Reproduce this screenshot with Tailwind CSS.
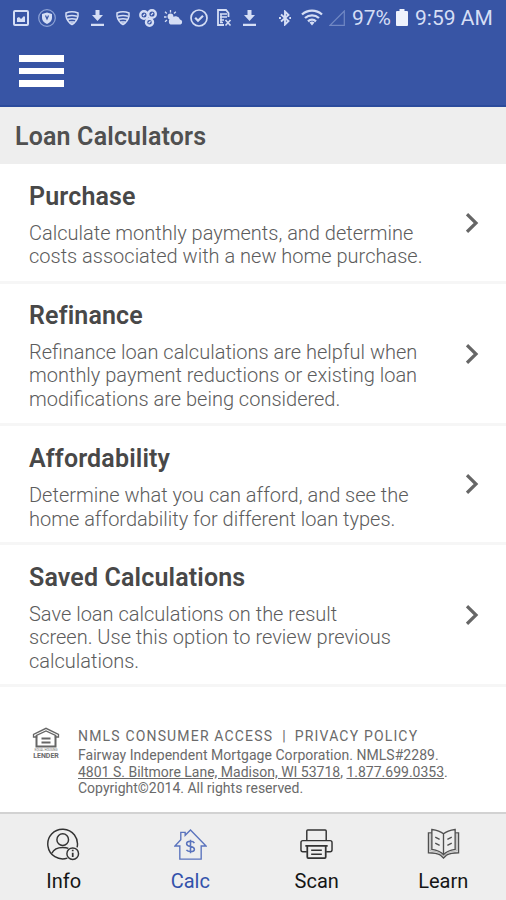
<!DOCTYPE html>
<html lang="en">
  <head>
    <meta charset="UTF-8" />
    <meta name="viewport" content="width=device-width, initial-scale=1.0" />
    <script src="https://cdn.jsdelivr.net/npm/@tailwindcss/browser@4"></script>
    <title>Loan Calculators</title>
  </head>

  <body class="bg-white font-['Roboto',sans-serif]">
    <div class="flex flex-col w-[506px] h-[900px] overflow-hidden">
      <header class="h-[107px] shrink-0 bg-[#3855a5] border-b-2 border-[#2b4b9c]">
        <!-- status bar -->
        <div class="flex items-center h-[35px] pl-[13px] text-[#d5def5]">
          <svg class="w-4 h-4 shrink-0" viewBox="0 0 16 16" fill="none" stroke="currentColor" stroke-width="2">
            <rect x="1" y="1" width="14" height="14" rx="1" />
            <path d="M4 12V8l2-1 2 2 3-3 1 1v5z" fill="currentColor" stroke="none" />
          </svg>
          <svg class="w-[18px] h-[18px] ml-[9px] shrink-0" viewBox="0 0 18 18" fill="none">
            <circle cx="9" cy="9" r="8.3" stroke="#8ea3d6" stroke-width="1.2" />
            <path d="M9 3.500 14 5v4c0 3-2.500 4.800-5 6-2.500-1.200-5-3-5-6V5z" fill="currentColor" />
            <path d="m7.500 6.500 1.500 3.500 1.500-3.500" stroke="#3855a5" stroke-width="1.200" />
          </svg>
          <svg class="w-[14px] h-4 ml-[9px] shrink-0" viewBox="0 0 14 16" fill="none" stroke="currentColor" stroke-width="1.500">
            <path d="M1 3q6-2.500 12 0v3q-1 5.500-6 8.500-5-3-6-8.500z" />
            <path d="M2 6.300q5-1.500 10 0M3 9.300q4-1.300 8 0M5 12h4" />
          </svg>
          <svg class="w-[13px] h-4 ml-3 shrink-0" viewBox="0 0 13 16" fill="currentColor">
            <path d="M4.500 0h4v5H12l-5.500 6L1 5h3.500zM0 13.800h13V16H0z" />
          </svg>
          <svg class="w-[14px] h-4 ml-3 shrink-0" viewBox="0 0 14 16" fill="none" stroke="currentColor" stroke-width="1.500">
            <path d="M1 3q6-2.500 12 0v3q-1 5.500-6 8.500-5-3-6-8.500z" />
            <path d="M2 6.300q5-1.500 10 0M3 9.300q4-1.300 8 0M5 12h4" />
          </svg>
          <svg class="w-[18px] h-[18px] ml-[9px] shrink-0" viewBox="0 0 18 18" fill="none" stroke="currentColor" stroke-width="2.400">
            <circle cx="5" cy="6" r="3.700" />
            <circle cx="13" cy="5" r="3.800" />
            <circle cx="10.500" cy="13.300" r="3.500" />
            <path d="m4 7 2-2M12 6l2-2M9.500 14.300l2-2" stroke-width="1.300" />
          </svg>
          <svg class="w-[19px] h-[18px] ml-[7px] shrink-0" viewBox="0 0 19 18" fill="currentColor">
            <path d="M8 15.500a3 3 0 0 1-.3-6 4.600 4.600 0 0 1 8.300 1 2.600 2.600 0 0 1 .5 5z" />
            <circle cx="6.500" cy="7.500" r="2.900" />
            <path d="M6.500 3.500V1M2.800 4.500 1 2.700M2.500 8H0M3 11l-2 1.700M10 4.500l1.800-1.800" stroke="currentColor" stroke-width="1.300" />
          </svg>
          <svg class="w-[18px] h-[18px] ml-[7px] shrink-0" viewBox="0 0 18 18" fill="none" stroke="currentColor" stroke-width="1.700">
            <circle cx="9" cy="9" r="8" />
            <path d="m5.200 8.800 2.800 2.900 5-5" stroke-width="2.200" />
          </svg>
          <svg class="w-[16px] h-[18px] ml-2 shrink-0" viewBox="0 0 16 18" fill="none" stroke="currentColor">
            <path d="M12.500 8V4l-2.500-3H2v15h6" stroke-width="1.800" />
            <path d="M4 5h7M4 8h7M4 11h4M4 13.500h3M5 5v9" stroke-width="1.500" />
            <path d="m9.500 11 5 5.500m0-5.500-5 5.500" stroke-width="1.600" />
          </svg>
          <svg class="w-[13px] h-4 ml-[11px] shrink-0" viewBox="0 0 13 16" fill="currentColor">
            <path d="M4.500 0h4v5H12l-5.500 6L1 5h3.500zM0 13.800h13V16H0z" />
          </svg>
          <svg class="w-3 h-4 ml-[23px] shrink-0" viewBox="0 0 12 16" fill="none" stroke="currentColor" stroke-width="1.900">
            <path d="m2 4.500 7.500 6.500L6 14.500v-13L9.500 5 2 11.500" />
            <path d="M0 8h2M10.300 8h1.700" />
          </svg>
          <svg class="w-[22px] h-[17px] ml-[10px] shrink-0" viewBox="0 0 22 17" fill="none" stroke="currentColor" stroke-width="2.300">
            <path d="M1 5.500a15 15 0 0 1 20 0M4 9a10.500 10.500 0 0 1 14 0M7 12.300a6 6 0 0 1 8 0" />
            <path d="m8.500 13.500 2.500 3 2.500-3q-2.500-1.800-5 0z" fill="currentColor" stroke="none" />
          </svg>
          <svg class="w-4 h-4 ml-[6px] shrink-0" viewBox="0 0 16 16" fill="none" stroke="#7188c4" stroke-width="1.200">
            <path d="M15.300 1v14.300H1z" />
          </svg>
          <span class="ml-[7px] w-[39px] mt-px text-[21px] tracking-[-0.100px] leading-none whitespace-nowrap">97%</span>
          <svg class="w-3 h-[17px] ml-[5px] shrink-0 text-[#eef2fc]" viewBox="0 0 12 17" fill="currentColor">
            <path d="M3.500 0h5v2H11q1 0 1 1v13q0 1-1 1H1q-1 0-1-1V3q0-1 1-1h2.500z" />
          </svg>
          <span class="ml-[7px] mt-px text-[21px] leading-none whitespace-nowrap">9:59 AM</span>
        </div>
        <button class="flex flex-col gap-[6px] mt-5 ml-[19px]" aria-label="Menu">
          <span class="block w-[45px] h-[6.500px] bg-white"></span>
          <span class="block w-[45px] h-[6.500px] bg-white"></span>
          <span class="block w-[45px] h-[6.500px] bg-white"></span>
        </button>
      </header>

      <h1 class="flex items-center h-[57px] shrink-0 pl-[15px] pt-[3px] bg-[#eeeeee] text-[25px] tracking-[0.170px] font-semibold text-[#505050]">
        Loan Calculators
      </h1>

      <main class="flex flex-col flex-1 text-[#5c5c5c]">
        <a href="#" class="flex items-center justify-between h-[120px] pl-[29px] pr-[27px] border-b-3 border-[#f6f6f6]">
          <div class="pt-[5px]">
            <h2 class="text-[25px] leading-[30px] tracking-[0.150px] font-semibold text-[#484848]">Purchase</h2>
            <p class="mt-[10px] text-[20px] leading-[23.300px] font-light whitespace-nowrap">Calculate monthly payments, and determine<br />costs associated with a new home purchase.</p>
          </div>
          <svg class="w-[13px] h-5" viewBox="0 0 13 20" fill="none" stroke="#666666" stroke-width="3.200">
            <path d="m1 1.200 9 8.800-9 8.800" />
          </svg>
        </a>
        <a href="#" class="flex items-center justify-between h-[142px] pl-[29px] pr-[27px] border-b-3 border-[#f6f6f6]">
          <div class="pt-[5px]">
            <h2 class="text-[25px] leading-[30px] tracking-[0.150px] font-semibold text-[#484848]">Refinance</h2>
            <p class="mt-[10px] text-[20px] leading-[23.300px] font-light whitespace-nowrap">Refinance loan calculations are helpful when<br />monthly payment reductions or existing loan<br />modifications are being considered.</p>
          </div>
          <svg class="w-[13px] h-5" viewBox="0 0 13 20" fill="none" stroke="#666666" stroke-width="3.200">
            <path d="m1 1.200 9 8.800-9 8.800" />
          </svg>
        </a>
        <a href="#" class="flex items-center justify-between h-[119px] pl-[29px] pr-[27px] border-b-3 border-[#f6f6f6]">
          <div class="pt-[7px]">
            <h2 class="text-[25px] leading-[30px] tracking-[0.150px] font-semibold text-[#484848]">Affordability</h2>
            <p class="mt-[10px] text-[20px] leading-[23.300px] font-light whitespace-nowrap">Determine what you can afford, and see the<br />home affordability for different loan types.</p>
          </div>
          <svg class="w-[13px] h-5" viewBox="0 0 13 20" fill="none" stroke="#666666" stroke-width="3.200">
            <path d="m1 1.200 9 8.800-9 8.800" />
          </svg>
        </a>
        <a href="#" class="flex items-center justify-between h-[142px] pl-[29px] pr-[27px] border-b-3 border-[#f6f6f6]">
          <div class="pt-[7px]">
            <h2 class="text-[25px] leading-[30px] tracking-[0.150px] font-semibold text-[#484848]">Saved Calculations</h2>
            <p class="mt-[10px] text-[20px] leading-[23.300px] font-light whitespace-nowrap">Save loan calculations on the result<br />screen. Use this option to review previous<br />calculations.</p>
          </div>
          <svg class="w-[13px] h-5" viewBox="0 0 13 20" fill="none" stroke="#666666" stroke-width="3.200">
            <path d="m1 1.200 9 8.800-9 8.800" />
          </svg>
        </a>

        <div class="flex pt-[39px] pl-8 text-[#6a6a6a]">
          <div class="w-7 pt-px shrink-0">
            <svg class="w-7 h-[21px]" viewBox="0 0 28 21" fill="none" stroke="#666666" stroke-width="2">
              <path d="M4.500 8.500v11h19v-11" />
              <path d="M1.500 10V7.500L14 1.300l12.500 6.200V10h-3V8.500L14 4 4.500 8.500V10z" stroke-width="1.300" />
              <path d="M9.500 11.500h9M9.500 15.500h9" />
            </svg>
            <p class="text-[3px] leading-[4px] text-center whitespace-nowrap">EQUAL HOUSING</p>
            <p class="text-[7px] leading-[8px] font-bold text-center">LENDER</p>
          </div>
          <div class="ml-[18px] text-[14px] leading-[16.700px] whitespace-nowrap">
            <p class="flex leading-[21px] tracking-[1.170px]"><a href="#">NMLS CONSUMER ACCESS</a><span class="ml-[9px] mr-2">|</span><a href="#">PRIVACY POLICY</a></p>
            <p class="tracking-[0.030px]">Fairway Independent Mortgage Corporation. NMLS#2289.</p>
            <p><a href="#" class="underline">4801 S. Biltmore Lane, Madison, WI 53718</a>, <a href="#" class="underline">1.877.699.0353</a>.</p>
            <p>Copyright©2014. All rights reserved.</p>
          </div>
        </div>
      </main>

      <nav class="grid grid-cols-4 h-[88px] shrink-0 border-t-2 border-[#d2d2d2] bg-[#eeeeee] text-[20px] leading-6 text-[#151515]">
        <a href="#" class="flex flex-col items-center pt-[14px] pl-px">
          <svg class="w-[33px] h-[33px]" viewBox="0 0 34 34" fill="none" stroke="#333333" stroke-width="1.500">
            <path d="M31 20a15.300 15.300 0 1 0-10 11" />
            <circle cx="16.200" cy="12" r="6" />
            <path d="M5 26q3-6 11-6 4 0 6 1" />
            <circle cx="26.500" cy="26.500" r="6" />
            <path d="M26.500 25.500v4.500M26.500 22.500v1.500" stroke-width="1.800" />
          </svg>
          <span class="mt-2">Info</span>
        </a>
        <a href="#" class="flex flex-col items-center pt-[14px] pl-px text-[#3352ab]">
          <svg class="w-[33px] h-[33px]" viewBox="0 0 34 34" fill="none" stroke="#5a73bd" stroke-width="1.400">
            <path d="M7 11.500V4.500h4.500v3L17 2l16 16.500h-5V32H6V18.500H1L7 12z" />
            <path d="M21 15.500q-1-1.800-4-1.800-4 0-4 2.500 0 2.200 4 2.800t4 2.800q0 2.500-4 2.500-3 0-4.200-1.800M17 12v14" stroke-width="1.600" />
          </svg>
          <span class="mt-2">Calc</span>
        </a>
        <a href="#" class="flex flex-col items-center pt-[14px] pl-px">
          <svg class="w-[33px] h-[33px]" viewBox="0 0 34 34" fill="none" stroke="#333333" stroke-width="1.500">
            <path d="M7 13V3q0-1 1-1h18q1 0 1 1v10" />
            <path d="M7 24.500H3q-2 0-2-2V15q0-2 2-2h28q2 0 2 2v7.500q0 2-2 2h-4" />
            <path d="M5.500 18.500h23M7.500 18.500V30q0 1 1 1h17q1 0 1-1V18.500" stroke-width="1.800" />
            <path d="M11.500 23h11M11.500 27h11" />
          </svg>
          <span class="mt-2">Scan</span>
        </a>
        <a href="#" class="flex flex-col items-center pt-[14px] pl-px">
          <svg class="w-[33px] h-[33px]" viewBox="0 0 34 34" fill="none" stroke="#505050" stroke-width="1.400">
            <path d="M17 6Q13 2.500 5 1.500V22q8 1 12 5.500Q21 23 29 22V1.500Q21 2.500 17 6zM17 6v21.500" />
            <path d="M5 5H1.500v20.500q8 0 12.500 2.500l3 3 3-3q4.500-2.500 12.500-2.500V5H29" />
            <path d="M3.200 5v18.500q9 .5 13.800 5.500 4.800-5 13.800-5.500V5" stroke="#a0a0a0" stroke-width="0.800" />
            <path d="m8.500 9.500 4.500 2.300M8.500 15.500l4.500 2.300M25.500 9.500 21 11.800M25.500 15.500 21 17.800" />
          </svg>
          <span class="mt-2">Learn</span>
        </a>
      </nav>
    </div>
  </body>
</html>
